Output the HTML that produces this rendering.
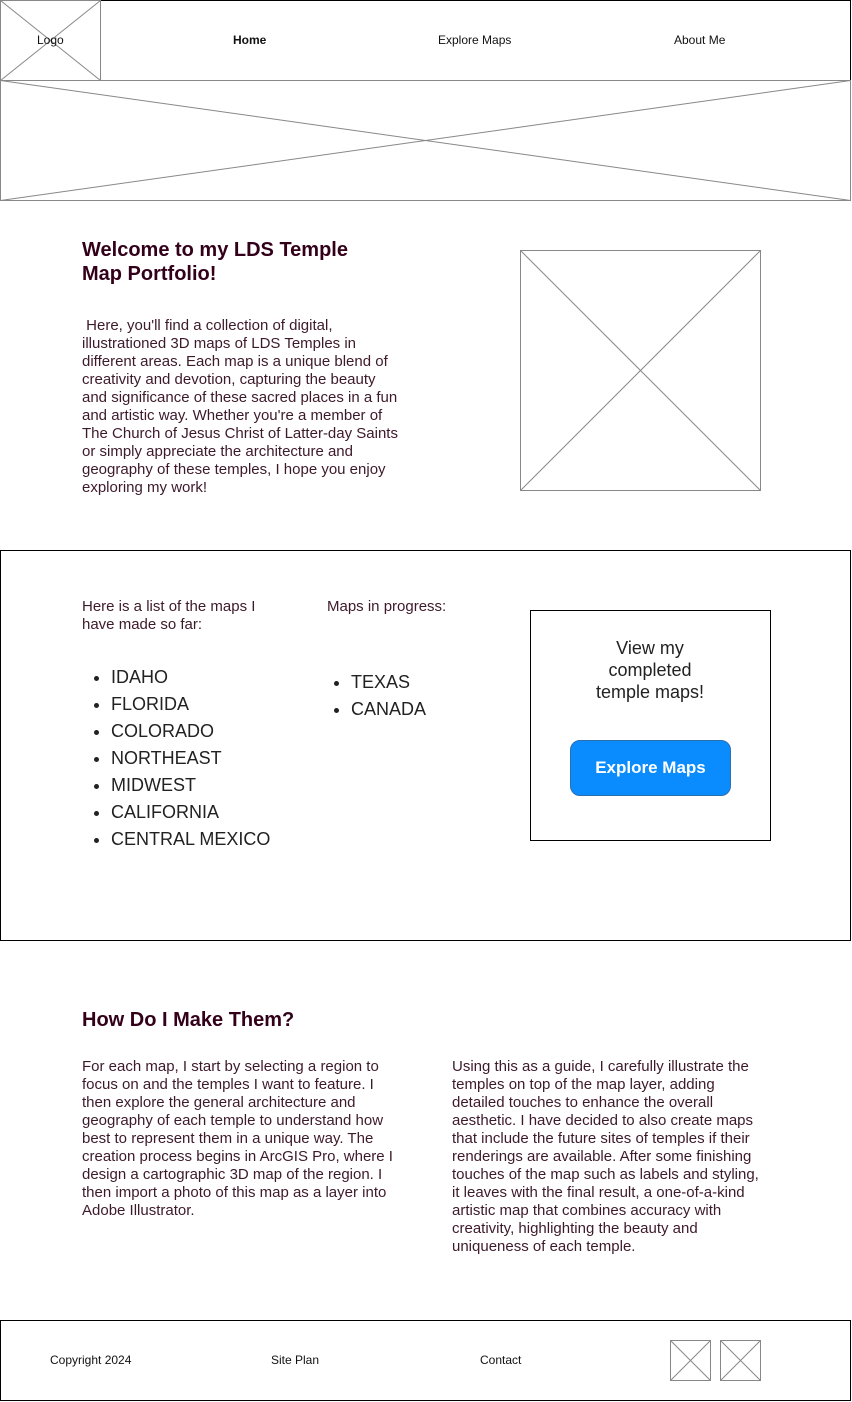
<!DOCTYPE html>
<html><head><meta charset="utf-8"><style>
*{margin:0;padding:0;box-sizing:border-box}
body{width:852px;height:1402px;position:relative;background:#fff;font-family:"Liberation Sans",Arial,sans-serif;overflow:hidden}
.a{position:absolute}
.t{color:#3d1a2a;font-size:15px;line-height:18px;white-space:nowrap}
h{position:absolute;font-weight:bold;color:#33001a;font-size:20px;line-height:24px}
.nav{font-size:12px;color:#111;position:absolute;top:33px}
ul{position:absolute;list-style:disc;font-size:18px;line-height:27px;color:#222;padding-left:29px}
</style></head><body>
<svg class="a" style="left:0;top:0" width="852" height="1402">
<g fill="none" stroke="#888" stroke-width="1">
<rect x="0.5" y="0.5" width="850" height="80" stroke="#000"/>
<rect x="0.5" y="0.5" width="100" height="80"/><line x1="0.5" y1="0.5" x2="100.5" y2="80.5"/><line x1="100.5" y1="0.5" x2="0.5" y2="80.5"/>
<rect x="0.5" y="80.5" width="850" height="120"/><line x1="0.5" y1="80.5" x2="850.5" y2="200.5"/><line x1="850.5" y1="80.5" x2="0.5" y2="200.5"/>
<rect x="520.5" y="250.5" width="240" height="240"/><line x1="520.5" y1="250.5" x2="760.5" y2="490.5"/><line x1="760.5" y1="250.5" x2="520.5" y2="490.5"/>
<rect x="0.5" y="550.5" width="850" height="390" stroke="#000"/>
<rect x="530.5" y="610.5" width="240" height="230" stroke="#000"/>
<rect x="0.5" y="1320.5" width="850" height="80" stroke="#000"/>
<rect x="670.5" y="1340.5" width="40" height="40"/><line x1="670.5" y1="1340.5" x2="710.5" y2="1380.5"/><line x1="710.5" y1="1340.5" x2="670.5" y2="1380.5"/>
<rect x="720.5" y="1340.5" width="40" height="40"/><line x1="720.5" y1="1340.5" x2="760.5" y2="1380.5"/><line x1="760.5" y1="1340.5" x2="720.5" y2="1380.5"/>
</g></svg>
<div class="nav" style="left:37px">Logo</div>
<div class="nav" style="left:233px;font-weight:bold">Home</div>
<div class="nav" style="left:438px">Explore Maps</div>
<div class="nav" style="left:674px">About Me</div>
<h style="left:82px;top:238px;width:300px">Welcome to my LDS Temple Map Portfolio!</h>
<div class="a t" style="left:82px;top:317px">&nbsp;Here, you'll find a collection of digital,<br>illustrationed 3D maps of LDS Temples in<br>different areas. Each map is a unique blend of<br>creativity and devotion, capturing the beauty<br>and significance of these sacred places in a fun<br>and artistic way. Whether you're a member of<br>The Church of Jesus Christ of Latter-day Saints<br>or simply appreciate the architecture and<br>geography of these temples, I hope you enjoy<br>exploring my work!</div>
<div class="a t" style="left:82px;top:598px">Here is a list of the maps I<br>have made so far:</div>
<div class="a t" style="left:327px;top:598px">Maps in progress:</div>
<ul style="left:82px;top:664px"><li>IDAHO</li><li>FLORIDA</li><li>COLORADO</li><li>NORTHEAST</li><li>MIDWEST</li><li>CALIFORNIA</li><li>CENTRAL MEXICO</li></ul>
<ul style="left:322px;top:669px"><li>TEXAS</li><li>CANADA</li></ul>
<div class="a" style="left:530px;top:637px;width:240px;text-align:center;font-size:18px;line-height:22px;color:#222">View my<br>completed<br>temple maps!</div>
<div class="a" style="left:570px;top:740px;width:161px;height:56px;background:#0a8cff;border:1px solid #2a6fb0;border-radius:10px;color:#fff;font-weight:bold;font-size:17px;line-height:54px;text-align:center">Explore Maps</div>
<h style="left:82px;top:1008px">How Do I Make Them?</h>
<div class="a t" style="left:82px;top:1058px">For each map, I start by selecting a region to<br>focus on and the temples I want to feature. I<br>then explore the general architecture and<br>geography of each temple to understand how<br>best to represent them in a unique way. The<br>creation process begins in ArcGIS Pro, where I<br>design a cartographic 3D map of the region. I<br>then import a photo of this map as a layer into<br>Adobe Illustrator.</div>
<div class="a t" style="left:452px;top:1058px">Using this as a guide, I carefully illustrate the<br>temples on top of the map layer, adding<br>detailed touches to enhance the overall<br>aesthetic. I have decided to also create maps<br>that include the future sites of temples if their<br>renderings are available. After some finishing<br>touches of the map such as labels and styling,<br>it leaves with the final result, a one-of-a-kind<br>artistic map that combines accuracy with<br>creativity, highlighting the beauty and<br>uniqueness of each temple.</div>
<div class="nav" style="left:50px;top:1353px">Copyright 2024</div>
<div class="nav" style="left:271px;top:1353px">Site Plan</div>
<div class="nav" style="left:480px;top:1353px">Contact</div>
</body></html>
